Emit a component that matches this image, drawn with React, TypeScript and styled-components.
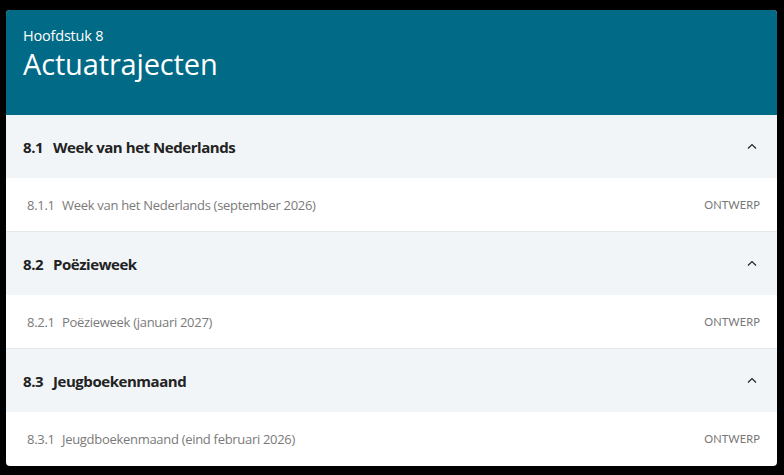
import React from "react";
import styled, { createGlobalStyle } from "styled-components";

const Global = createGlobalStyle`
  html, body { margin: 0; padding: 0; background: #000; }
  body { font-family: "Open Sans", "Noto Sans", sans-serif; }
`;

const Page = styled.div`
  padding: 10px 7px 9px 6px;
  height: 475px;
  box-sizing: border-box;
`;

const Card = styled.div`
  background: #fff;
  border-radius: 4px;
  overflow: hidden;
  height: 456px;
  display: flex;
  flex-direction: column;
`;

const Header = styled.header`
  background: #006a87;
  color: #fff;
  height: 105px;
  box-sizing: border-box;
  padding: 16px 17px 0 17px;
`;

const Kicker = styled.div`
  font-size: 14.5px;
  line-height: 20px;
  letter-spacing: -0.2px;
`;

const Title = styled.h1`
  margin: 0;
  font-weight: 400;
  font-size: 29px;
  line-height: 36px;
  letter-spacing: -0.15px;
`;

const Section = styled.section<{ $last?: boolean }>`
  border-bottom: ${(p) => (p.$last ? "none" : "1px solid #e3e8eb")};
`;

const SectionHead = styled.div`
  height: 63px;
  background: #f1f5f8;
  display: flex;
  align-items: center;
  padding: 0 17px;
  font-weight: 700;
  font-size: 15px;
  letter-spacing: -0.45px;
  color: #222;
`;

const Num = styled.span<{ $w: number }>`
  display: inline-block;
  width: ${(p) => p.$w}px;
`;

const Grow = styled.span`
  flex: 1;
`;

const Chevron = styled.svg`
  width: 10px;
  height: 7px;
  margin-right: 3px;
`;

const Item = styled.div`
  height: 53px;
  display: flex;
  align-items: center;
  padding: 0 17px 0 21px;
  font-size: 13px;
  letter-spacing: -0.3px;
  color: #7a7a7a;
`;

const Status = styled.span`
  font-family: Lato, "Open Sans", sans-serif;
  font-size: 11px;
  color: #777;
  letter-spacing: 0.1px;
`;

const data = [
  { n: "8.1", t: "Week van het Nederlands", in: "8.1.1", it: "Week van het Nederlands (september 2026)" },
  { n: "8.2", t: "Poëzieweek", in: "8.2.1", it: "Poëzieweek (januari 2027)" },
  { n: "8.3", t: "Jeugboekenmaand", in: "8.3.1", it: "Jeugdboekenmaand (eind februari 2026)" },
];

export default function App() {
  return (
    <>
      <Global />
      <Page>
        <Card>
          <Header>
            <Kicker>Hoofdstuk 8</Kicker>
            <Title>Actuatrajecten</Title>
          </Header>
          {data.map((d, i) => (
            <Section key={d.n} $last={i === data.length - 1}>
              <SectionHead>
                <Num $w={30}>{d.n}</Num>
                <Grow>{d.t}</Grow>
                <Chevron viewBox="0 0 10 7">
                  <path d="M1 5.5 L5 1.6 L9 5.5" fill="none" stroke="#222" strokeWidth="1.2" />
                </Chevron>
              </SectionHead>
              <Item>
                <Num $w={35}>{d.in}</Num>
                <Grow>{d.it}</Grow>
                <Status>ONTWERP</Status>
              </Item>
            </Section>
          ))}
        </Card>
      </Page>
    </>
  );
}
